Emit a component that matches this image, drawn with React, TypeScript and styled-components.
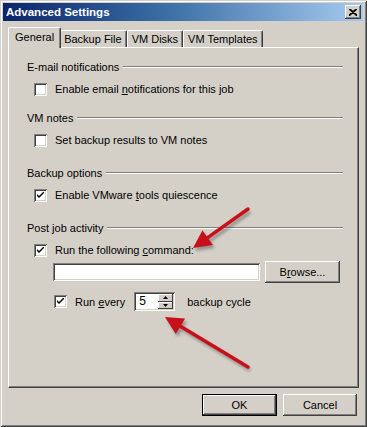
import React from 'react';
import styled, { createGlobalStyle } from 'styled-components';

const GlobalStyle = createGlobalStyle`
  html, body {
    margin: 0;
    padding: 0;
    background: #d4d0c8;
  }
  * {
    box-sizing: border-box;
  }
`;

const Window = styled.div`
  position: relative;
  width: 367px;
  height: 427px;
  background: #d4d0c8;
  padding: 3px 4px 4px 3px;
  display: flex;
  flex-direction: column;
  font-family: 'Liberation Sans', Arial, sans-serif;
  font-size: 11px;
  color: #000;
  box-shadow: inset 1px 1px 0 #d4d0c8, inset -1px -1px 0 #404040, inset 2px 2px 0 #fff,
    inset -2px -2px 0 #808080;
`;

const TitleBar = styled.div`
  height: 18px;
  display: flex;
  align-items: center;
  justify-content: space-between;
  padding: 0 2px 0 3px;
  background: linear-gradient(to right, #0a246a 0%, #3a6ea5 45%, #a6caf0 100%);
  color: #fff;
  font-weight: bold;
  font-size: 11.5px;
`;

const CloseButton = styled.div`
  width: 16px;
  height: 14px;
  background: #d4d0c8;
  display: flex;
  align-items: center;
  justify-content: center;
  box-shadow: inset -1px -1px 0 #404040, inset 1px 1px 0 #fff, inset -2px -2px 0 #808080;
`;

const Body = styled.div`
  flex: 1;
  display: flex;
  flex-direction: column;
  padding: 6px 4px 0 5px;
`;

const TabRow = styled.div`
  display: flex;
  align-items: flex-end;
  height: 20px;
  padding-left: 2px;
  position: relative;
  z-index: 1;
`;

const Tab = styled.div<{ $active?: boolean }>`
  height: ${({ $active }) => ($active ? '21px' : '17px')};
  margin: ${({ $active }) => ($active ? '0 -2px -1px -2px' : '0')};
  padding: ${({ $active }) => ($active ? '3px 6px 0 6px' : '2px 4px 0 4px')};
  background: #d4d0c8;
  border-top: 1px solid #fff;
  border-left: 1px solid #fff;
  border-right: 1px solid #404040;
  border-radius: 2px 2px 0 0;
  box-shadow: inset -1px 0 0 #808080;
  white-space: nowrap;
  position: relative;
  z-index: ${({ $active }) => ($active ? 2 : 1)};
`;

const Panel = styled.div`
  height: 341px;
  background: #d4d0c8;
  border-top: 1px solid #fff;
  border-left: 1px solid #fff;
  border-right: 1px solid #404040;
  border-bottom: 1px solid #404040;
  box-shadow: inset -1px -1px 0 #808080;
  padding: 12px 15px 0 18px;
  display: flex;
  flex-direction: column;
`;

const Group = styled.div<{ $gap: number }>`
  margin-top: ${({ $gap }) => $gap}px;
  display: flex;
  flex-direction: column;
  gap: 8px;
`;

const GroupHeader = styled.div`
  display: flex;
  align-items: center;
  gap: 4px;
  height: 14px;
  white-space: nowrap;

  &::after {
    content: '';
    flex: 1;
    height: 0;
    border-top: 1px solid #808080;
    border-bottom: 1px solid #fff;
  }
`;

const GroupBody = styled.div`
  display: flex;
  flex-direction: column;
  padding-left: 7px;
`;

const CheckRow = styled.label`
  display: flex;
  align-items: center;
  gap: 8px;
  height: 14px;
  white-space: nowrap;
`;

const Box = styled.span`
  width: 13px;
  height: 13px;
  background: #fff;
  display: inline-flex;
  align-items: center;
  justify-content: center;
  box-shadow: inset 1px 1px 0 #808080, inset -1px -1px 0 #fff, inset 2px 2px 0 #404040,
    inset -2px -2px 0 #d4d0c8;
`;

const Key = styled.span`
  text-decoration: underline;
`;

const CommandRow = styled.div`
  display: flex;
  align-items: center;
  gap: 5px;
  margin: 3px 0 0 19px;
  height: 23px;
`;

const TextField = styled.div<{ $width: number }>`
  width: ${({ $width }) => $width}px;
  height: 18px;
  background: #fff;
  box-shadow: inset 1px 1px 0 #808080, inset -1px -1px 0 #fff, inset 2px 2px 0 #404040,
    inset -2px -2px 0 #d4d0c8;
`;

const Button = styled.div<{ $width: number; $default?: boolean }>`
  width: ${({ $width }) => $width}px;
  height: 22px;
  display: flex;
  align-items: center;
  justify-content: center;
  background: #d4d0c8;
  border: ${({ $default }) => ($default ? '1px solid #000' : 'none')};
  box-shadow: inset -1px -1px 0 #404040, inset 1px 1px 0 #fff, inset -2px -2px 0 #808080;
`;

const EveryRow = styled.div`
  display: flex;
  align-items: center;
  margin: 9px 0 0 20px;
  height: 19px;
  white-space: nowrap;
`;

const Spinner = styled.div`
  display: flex;
  width: 41px;
  height: 19px;
  margin-left: 9px;
  background: #fff;
  padding: 2px;
  box-shadow: inset 1px 1px 0 #808080, inset -1px -1px 0 #fff, inset 2px 2px 0 #404040,
    inset -2px -2px 0 #d4d0c8;
`;

const SpinValue = styled.div`
  flex: 1;
  padding-left: 3px;
  font-size: 12px;
  line-height: 15px;
`;

const SpinButtons = styled.div`
  width: 15px;
  display: flex;
  flex-direction: column;
`;

const SpinButton = styled.div`
  flex: 1;
  background: #d4d0c8;
  display: flex;
  align-items: center;
  justify-content: center;
  box-shadow: inset -1px -1px 0 #404040, inset 1px 1px 0 #fff;
`;

const SpinLabel = styled.span`
  margin-left: 12px;
`;

const Footer = styled.div`
  display: flex;
  justify-content: flex-end;
  gap: 6px;
  padding: 6px 2px 0 0;
`;

const ArrowLayer = styled.svg`
  position: absolute;
  left: 0;
  top: 0;
  pointer-events: none;
`;

const Check = () => (
  <svg width="7" height="7" viewBox="0 0 7 7">
    <path d="M0 2 L0 4 L2 6 L7 1 L7 -1 L2 4 Z" fill="#000" />
  </svg>
);

const CheckBox = ({ checked }: { checked?: boolean }) => <Box>{checked && <Check />}</Box>;

const Arrow = ({ x1, y1, x2, y2 }: { x1: number; y1: number; x2: number; y2: number }) => {
  const a = Math.atan2(y2 - y1, x2 - x1);
  const len = 18;
  const w = 9;
  const bx = x2 - Math.cos(a) * len;
  const by = y2 - Math.sin(a) * len;
  const px = -Math.sin(a) * w;
  const py = Math.cos(a) * w;
  const head = `${x2},${y2} ${bx + px},${by + py} ${bx - px},${by - py}`;
  return (
    <g>
      <g transform="translate(2,3)" opacity="0.3" filter="url(#blur)">
        <line x1={x1} y1={y1} x2={bx} y2={by} stroke="#000" strokeWidth="3.5" />
        <polygon points={head} fill="#000" />
      </g>
      <line x1={x1} y1={y1} x2={bx} y2={by} stroke="#c8101a" strokeWidth="3.5" strokeLinecap="round" />
      <polygon points={head} fill="#c8101a" />
    </g>
  );
};

export default function App() {
  return (
    <>
      <GlobalStyle />
      <Window>
        <TitleBar>
          <span>Advanced Settings</span>
          <CloseButton>
            <svg width="8" height="7" viewBox="0 0 8 7">
              <path d="M0 0 L8 7 M8 0 L0 7 M1 0 L8 6 M7 0 L0 6" stroke="#000" strokeWidth="1.2" />
            </svg>
          </CloseButton>
        </TitleBar>
        <Body>
          <TabRow>
            <Tab $active>General</Tab>
            <Tab>Backup File</Tab>
            <Tab>VM Disks</Tab>
            <Tab>VM Templates</Tab>
          </TabRow>
          <Panel>
            <Group $gap={0}>
              <GroupHeader>E-mail notifications</GroupHeader>
              <GroupBody>
                <CheckRow>
                  <CheckBox />
                  <span>
                    Enable email <Key>n</Key>otifications for this job
                  </span>
                </CheckRow>
              </GroupBody>
            </Group>
            <Group $gap={15}>
              <GroupHeader>VM notes</GroupHeader>
              <GroupBody>
                <CheckRow>
                  <CheckBox />
                  <span>Set backup results to VM notes</span>
                </CheckRow>
              </GroupBody>
            </Group>
            <Group $gap={19}>
              <GroupHeader>Backup options</GroupHeader>
              <GroupBody>
                <CheckRow>
                  <CheckBox checked />
                  <span>
                    Enable VMware <Key>t</Key>ools quiescence
                  </span>
                </CheckRow>
              </GroupBody>
            </Group>
            <Group $gap={19}>
              <GroupHeader>Post job activity</GroupHeader>
              <GroupBody>
                <CheckRow>
                  <CheckBox checked />
                  <span>
                    Run the following <Key>c</Key>ommand:
                  </span>
                </CheckRow>
                <CommandRow>
                  <TextField $width={207} />
                  <Button $width={75}>
                    <span>
                      B<Key>r</Key>owse...
                    </span>
                  </Button>
                </CommandRow>
                <EveryRow>
                  <CheckRow>
                    <CheckBox checked />
                    <span>
                      Run <Key>e</Key>very
                    </span>
                  </CheckRow>
                  <Spinner>
                    <SpinValue>5</SpinValue>
                    <SpinButtons>
                      <SpinButton>
                        <svg width="5" height="3" viewBox="0 0 5 3">
                          <path d="M2.5 0 L5 3 L0 3 Z" fill="#000" />
                        </svg>
                      </SpinButton>
                      <SpinButton>
                        <svg width="5" height="3" viewBox="0 0 5 3">
                          <path d="M0 0 L5 0 L2.5 3 Z" fill="#000" />
                        </svg>
                      </SpinButton>
                    </SpinButtons>
                  </Spinner>
                  <SpinLabel>backup cycle</SpinLabel>
                </EveryRow>
              </GroupBody>
            </Group>
          </Panel>
          <Footer>
            <Button $width={75} $default>
              OK
            </Button>
            <Button $width={74}>Cancel</Button>
          </Footer>
        </Body>
        <ArrowLayer width="367" height="427">
          <defs>
            <filter id="blur">
              <feGaussianBlur stdDeviation="1.5" />
            </filter>
          </defs>
          <Arrow x1={248} y1={209} x2={193} y2={248} />
          <Arrow x1={248} y1={367} x2={165} y2={317} />
        </ArrowLayer>
      </Window>
    </>
  );
}
